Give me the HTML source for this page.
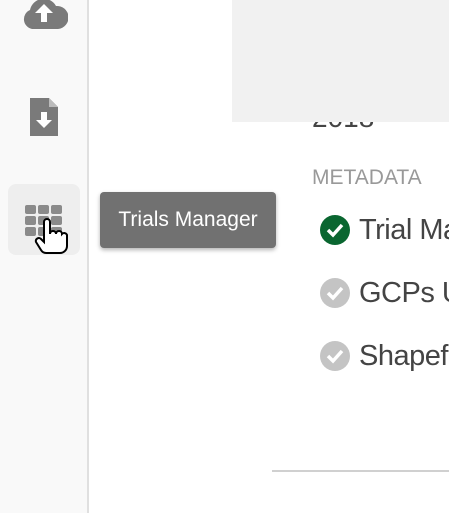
<!DOCTYPE html>
<html><head><style>
html,body{overflow:hidden}
body{margin:0;width:449px;height:513px;overflow:hidden;background:#fff;font-family:"Liberation Sans",sans-serif;position:relative}
.side{position:absolute;left:0;top:0;width:87px;height:513px;background:#f9f9f9;border-right:2px solid #e0e0e0}
.abs{position:absolute}
.sq{position:absolute;width:11px;height:9px;background:#8a8a8a;border-radius:2px}
.row{position:absolute;left:320px;width:129px;height:40px;margin-top:-20px;overflow:hidden;font-size:29px;color:#444;white-space:nowrap;letter-spacing:-0.5px}
.ic{position:absolute;left:0;top:5px;width:30px;height:30px;border-radius:50%}
.ck{position:absolute;left:6px;top:12px}
.row span{position:absolute;left:39px;top:4px}
</style></head><body>
<div class="side"></div>
<svg class="abs" style="left:20px;top:-8px" width="48" height="38" viewBox="0 0 48 38"><path d="M12 37 A10 10 0 0 1 10 18 A14 14 0 0 1 36 14 A11 11 0 0 1 38 37 Z" fill="#7a7a7a"/><path d="M24 12 L33 21 H27 V30 H21 V21 H15 Z" fill="#fff"/></svg>
<svg class="abs" style="left:30px;top:98px" width="29" height="38" viewBox="0 0 29 38"><path d="M0 0 H19 L28 9 V38 H0 Z" fill="#7a7a7a"/><path d="M19 0 V9 H28" fill="#bbb"/><path d="M11 14 H17 V22 H22 L14 30 L6 22 H11 Z" fill="#fff"/></svg>
<div class="abs" style="left:8px;top:184px;width:72px;height:71px;background:#eee;border-radius:8px"></div>
<div class="sq" style="left:25px;top:205px"></div><div class="sq" style="left:38px;top:205px"></div><div class="sq" style="left:51px;top:205px"></div>
<div class="sq" style="left:25px;top:216px"></div><div class="sq" style="left:38px;top:216px"></div><div class="sq" style="left:51px;top:216px"></div>
<div class="sq" style="left:25px;top:227px"></div><div class="sq" style="left:38px;top:227px"></div><div class="sq" style="left:51px;top:227px"></div>
<svg class="abs" style="left:34px;top:218px" width="34" height="37" viewBox="0 0 34 37"><path d="M10 24 V4 a3 3 0 0 1 6 0 V16 a3 3 0 0 1 6 0 a3 3 0 0 1 6 0 a3 3 0 0 1 5 1 V28 a7 7 0 0 1 -7 7 H12 a6 6 0 0 1 -5-3 L2 24 a3 3 0 0 1 5-3 Z" fill="#fff" stroke="#000" stroke-width="2"/></svg>
<div class="abs" style="left:100px;top:192px;width:176px;height:56px;background:#717171;border-radius:4px;box-shadow:0 2px 4px rgba(0,0,0,.3);color:#fff;font-size:21px;line-height:56px;text-align:center">Trials Manager</div>
<div class="abs" style="left:312px;top:102px;font-size:28px;color:#444">2018</div>
<div class="abs" style="left:232px;top:0;width:217px;height:122px;background:#f1f1f1"></div>
<div class="abs" style="left:312px;top:166px;font-size:21px;color:#999">METADATA</div>
<div class="row" style="top:230px"><div class="ic" style="background:#0a6630"></div><svg class="ck" width="18" height="16"><path d="M2 8 L7 13 L16 3" stroke="#fff" stroke-width="3.5" fill="none"/></svg><span>Trial Map</span></div>
<div class="row" style="top:293px"><div class="ic" style="background:#c4c4c4"></div><svg class="ck" width="18" height="16"><path d="M2 8 L7 13 L16 3" stroke="#fff" stroke-width="3.5" fill="none"/></svg><span>GCPs Upload</span></div>
<div class="row" style="top:356px"><div class="ic" style="background:#c4c4c4"></div><svg class="ck" width="18" height="16"><path d="M2 8 L7 13 L16 3" stroke="#fff" stroke-width="3.5" fill="none"/></svg><span>Shapefile</span></div>
<div class="abs" style="left:272px;top:470px;width:177px;height:2px;background:#d0d0d0"></div>
</body></html>
